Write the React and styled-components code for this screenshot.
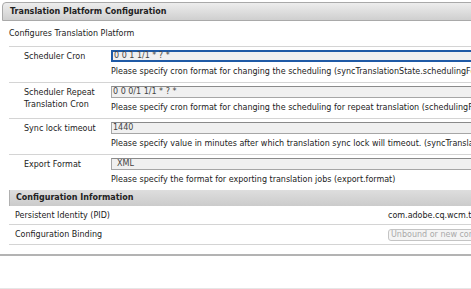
import React from 'react';
import styled, { createGlobalStyle } from 'styled-components';

const GlobalStyle = createGlobalStyle`
  html, body {
    margin: 0;
    padding: 0;
    background: #fff;
    overflow: hidden;
  }
  body {
    font-family: "DejaVu Sans", Verdana, sans-serif;
    font-size: 8px;
    color: #222;
  }
`;

const fields = [
  {
    label: 'Scheduler Cron',
    value: '0 0 1 1/1 * ? *',
    focused: true,
    hint: 'Please specify cron format for changing the scheduling (syncTranslationState.schedulingFormat)',
  },
  {
    label: ['Scheduler Repeat', 'Translation Cron'],
    value: '0 0 0/1 1/1 * ? *',
    hint: 'Please specify cron format for changing the scheduling for repeat translation (schedulingRepeatTranslation.schedulingFormat)',
  },
  {
    label: 'Sync lock timeout',
    value: '1440',
    hint: 'Please specify value in minutes after which translation sync lock will timeout. (syncTranslationState.lockTimeoutInMinutes)',
  },
  {
    label: 'Export Format',
    value: 'XML',
    indent: true,
    hint: 'Please specify the format for exporting translation jobs (export.format)',
  },
];

const App = () => {
  return (
    <Page>
      <GlobalStyle />
      <TitleBar>Translation Platform Configuration</TitleBar>
      <Description>Configures Translation Platform</Description>
      <Form>
        {fields.map((f, i) => (
          <FieldRow key={i}>
            <Label>
              {Array.isArray(f.label)
                ? f.label.map((l) => <div key={l}>{l}</div>)
                : f.label}
            </Label>
            <FieldCell>
              <TextInput $focused={f.focused} $indent={f.indent}>
                {f.value}
              </TextInput>
              <Hint>{f.hint}</Hint>
            </FieldCell>
          </FieldRow>
        ))}
      </Form>
      <InfoHeader>Configuration Information</InfoHeader>
      <InfoTable>
        <InfoRow>
          <InfoLabel>Persistent Identity (PID)</InfoLabel>
          <InfoValue>com.adobe.cq.wcm.translation.impl.TranslationPlatformConfigurationImpl</InfoValue>
        </InfoRow>
        <InfoRow>
          <InfoLabel>Configuration Binding</InfoLabel>
          <InfoValue>
            <BindingInput>Unbound or new configuration</BindingInput>
          </InfoValue>
        </InfoRow>
      </InfoTable>
      <Footer />
    </Page>
  );
};

const Page = styled.div`
  width: 900px;
  height: 289px;
  padding-top: 2px;
  box-sizing: border-box;
  border-bottom: 1px solid #e6e6e6;
`;

const TitleBar = styled.div`
  margin-left: 2px;
  height: 17px;
  line-height: 17px;
  padding-left: 7px;
  border: 1px solid #a9a9a9;
  border-radius: 4px 0 0 0;
  background: linear-gradient(#ededed, #cfcfcf);
  font-weight: bold;
  color: #222;
`;

const Description = styled.div`
  padding-left: 9px;
  height: 24px;
  line-height: 24px;
  margin-top: 1px;
`;

const Form = styled.div`
  margin-left: 9px;
`;

const FieldRow = styled.div`
  display: grid;
  grid-template-columns: 102px 1fr;
  border-top: 1px solid #d4d4d4;
  padding: 3px 0 4px;
`;

const Label = styled.div`
  padding-left: 15px;
  padding-top: 1px;
  line-height: 12px;
`;

const FieldCell = styled.div`
  display: flex;
  flex-direction: column;
  white-space: nowrap;
`;

const TextInput = styled.div`
  height: 12px;
  box-sizing: border-box;
  padding-left: ${({ $indent }) => ($indent ? '5px' : '1px')};
  background: #f0f0f0;
  border: ${({ $focused }) => ($focused ? '2px solid #1f5aa6' : '1px solid #a6a6a6')};
  border-top-color: ${({ $focused }) => ($focused ? '#1f5aa6' : '#8a8a8a')};
  line-height: ${({ $focused }) => ($focused ? '8px' : '10px')};
  color: #444;
  font-size: 8px;
`;

const Hint = styled.div`
  padding-top: 4px;
  line-height: 12px;
`;

const InfoHeader = styled.div`
  margin-left: 9px;
  height: 16px;
  line-height: 16px;
  padding-left: 6px;
  border-left: 1px solid #b0b0b0;
  background: linear-gradient(#dedede, #cbcbcb);
  font-weight: bold;
`;

const InfoTable = styled.div`
  margin-left: 9px;
`;

const InfoRow = styled.div`
  display: grid;
  grid-template-columns: 379px 1fr;
  border-bottom: 1px solid #d4d4d4;
  height: 18px;
  align-items: center;
  white-space: nowrap;
  & + & {
    height: 19px;
  }
`;

const InfoLabel = styled.div`
  padding-left: 6px;
`;

const InfoValue = styled.div``;

const BindingInput = styled.div`
  display: inline-block;
  width: 200px;
  height: 12px;
  line-height: 10px;
  box-sizing: border-box;
  padding-left: 2px;
  border: 1px solid #c4c4c4;
  border-radius: 3px;
  background: #f4f4f4;
  color: #a9a9a9;
`;

const Footer = styled.div`
  margin-top: 9px;
  border-top: 2px solid #b3b3b3;
`;

export default App;
